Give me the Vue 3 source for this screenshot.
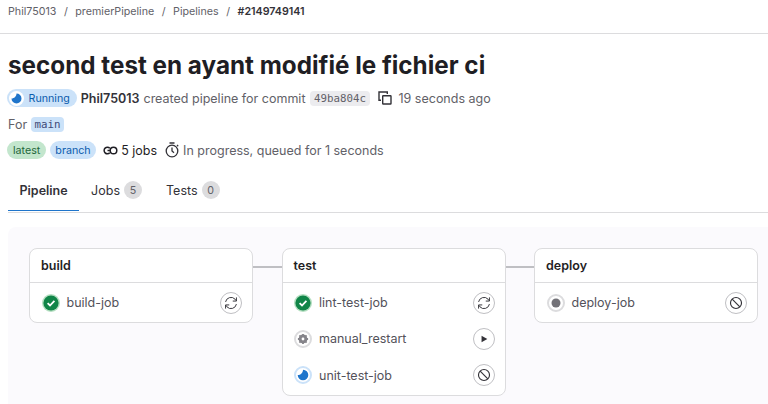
<script setup>
const tabs = [
  { name: 'Pipeline', active: true },
  { name: 'Jobs', count: 5 },
  { name: 'Tests', count: 0 },
]

const stages = [
  { name: 'build', jobs: [{ name: 'build-job', status: 'success', action: 'retry' }] },
  {
    name: 'test',
    jobs: [
      { name: 'lint-test-job', status: 'success', action: 'retry' },
      { name: 'manual_restart', status: 'manual', action: 'play' },
      { name: 'unit-test-job', status: 'running', action: 'cancel' },
    ],
  },
  { name: 'deploy', jobs: [{ name: 'deploy-job', status: 'pending', action: 'cancel' }] },
]
</script>

<template>
  <div class="page">
    <nav class="crumbs">
      <span>Phil75013</span><i>/</i>
      <span>premierPipeline</span><i>/</i>
      <span>Pipelines</span><i>/</i>
      <b>#2149749141</b>
    </nav>

    <h1>second test en ayant modifié le fichier ci</h1>

    <div class="meta">
      <span class="badge status-badge">
        <svg viewBox="0 0 15 15" width="15" height="15">
          <circle cx="7.5" cy="7.5" r="7.5" fill="#fff" />
          <path d="M7.5 2.5A5 5 0 1 1 2.5 7.5C5.3 7.5 7.5 5.3 7.5 2.5Z" fill="#1f75cb" />
        </svg>
        Running
      </span>
      <strong>Phil75013</strong>
      <span>created pipeline for commit</span>
      <code class="sha">49ba804c</code>
      <svg class="copy" viewBox="0 0 14 14" width="14" height="14" fill="none" stroke="#333238" stroke-width="1.4">
        <path d="M3 9.3H1V1H9.3V3" />
        <rect x="4.7" y="4.7" width="8.3" height="8.3" rx="0.5" />
      </svg>
      <span class="ago">19 seconds ago</span>
    </div>

    <div class="meta for">
      <span>For</span>
      <code class="ref">main</code>
    </div>

    <div class="meta tags">
      <span class="badge green">latest</span>
      <span class="badge blue">branch</span>
      <span class="jobs">
        <svg viewBox="0 0 15 15" width="15" height="15" fill="none" stroke="#1f1e24" stroke-width="1.5">
          <circle cx="10.5" cy="7.5" r="3.3" />
          <path d="M6.8 5.2A3.3 3.3 0 1 0 6.8 9.8" />
          <path d="M4.5 7.5H7.5" />
        </svg>
        5 jobs
      </span>
      <span class="progress">
        <svg viewBox="0 0 14 16" width="14" height="16" fill="none" stroke="#333238" stroke-width="1.3">
          <circle cx="7" cy="9" r="5.8" />
          <path d="M7 5.5V9L9 10.8M4.5 1H9.5M12 3L13.2 4.2" />
        </svg>
        In progress, queued for 1 seconds
      </span>
    </div>

    <div class="tabs">
      <div v-for="tab in tabs" :key="tab.name" class="tab" :class="{ active: tab.active }">
        {{ tab.name }}
        <span v-if="tab.count !== undefined" class="count">{{ tab.count }}</span>
      </div>
    </div>

    <div class="graph">
      <template v-for="(stage, index) in stages" :key="stage.name">
        <div v-if="index" class="link"></div>
        <section class="stage">
          <header>{{ stage.name }}</header>
          <div class="job-list">
            <div v-for="job in stage.jobs" :key="job.name" class="job">
              <svg class="status" viewBox="0 0 18 18" width="18" height="18">
                <template v-if="job.status === 'success'">
                  <circle cx="9" cy="9" r="9" fill="#b5dfc1" />
                  <circle cx="9" cy="9" r="7.6" fill="#108548" />
                  <path d="M5.6 9.2L8 11.5L12.4 6.8" fill="none" stroke="#fff" stroke-width="1.8" />
                </template>
                <template v-else-if="job.status === 'manual'">
                  <circle cx="9" cy="9" r="8" fill="#fff" stroke="#dcdcde" stroke-width="2" />
                  <circle cx="9" cy="9" r="3.3" fill="none" stroke="#85848a" stroke-width="2.2" />
                  <path d="M9 3.9V14.1M3.9 9H14.1M5.4 5.4L12.6 12.6M12.6 5.4L5.4 12.6" stroke="#85848a" stroke-width="1.8" />
                  <circle cx="9" cy="9" r="1.4" fill="#fff" />
                </template>
                <template v-else-if="job.status === 'running'">
                  <circle cx="9" cy="9" r="8" fill="#fff" stroke="#cbe2f9" stroke-width="2" />
                  <path d="M9 3.7A5.3 5.3 0 1 1 3.7 9C6.7 9 9 6.7 9 3.7Z" fill="#1f75cb" />
                </template>
                <template v-else>
                  <circle cx="9" cy="9" r="8" fill="#fff" stroke="#dcdcde" stroke-width="2" />
                  <circle cx="9" cy="9" r="4.5" fill="#737278" />
                </template>
              </svg>
              <span class="job-name">{{ job.name }}</span>
              <span class="action">
                <svg viewBox="0 0 16 16" width="14" height="14" fill="none" stroke="#333238" stroke-width="1.1">
                  <template v-if="job.action === 'retry'">
                    <path d="M1.8 6.8A6.3 6.3 0 0 1 12.6 3.6L14 5.4" />
                    <path d="M14.2 1.6V5.8H10" />
                    <path d="M14.2 9.2A6.3 6.3 0 0 1 3.4 12.4L2 10.6" />
                    <path d="M1.8 14.4V10.2H6" />
                  </template>
                  <path v-else-if="job.action === 'play'" d="M5.2 4.2V11.8L11.8 8Z" fill="#333238" stroke="none" />
                  <template v-else>
                    <circle cx="8" cy="8" r="6.3" stroke-width="1.3" />
                    <path d="M3.6 3.6L12.4 12.4" stroke-width="1.3" />
                  </template>
                </svg>
              </span>
            </div>
          </div>
        </section>
      </template>
    </div>
  </div>
</template>

<style>
html,
body {
  margin: 0;
  background: #fff;
  overflow: hidden;
}
</style>

<style scoped>
.page {
  width: 768px;
  height: 404px;
  overflow: hidden;
  box-sizing: border-box;
  padding: 0 0 0 8px;
  font-family: Inter, "Noto Sans", sans-serif;
  font-size: 12.5px;
  color: #626168;
}

.crumbs {
  display: flex;
  align-items: center;
  height: 22px;
  margin-left: -8px;
  padding: 0 0 11px 8px;
  border-bottom: 1px solid #dcdcde;
  font-size: 10.7px;
  color: #626168;
}

.crumbs i {
  font-style: normal;
  margin: 0 7.5px;
}

.crumbs b {
  color: #333238;
  font-weight: 600;
}

h1 {
  margin: 14px 0 0;
  font-size: 24.25px;
  line-height: 36px;
  font-weight: 700;
  color: #1f1e24;
}

.meta {
  display: flex;
  align-items: center;
  height: 20px;
  white-space: nowrap;
}

h1 + .meta {
  margin-top: 4px;
}

.meta > strong {
  margin-left: 4px;
  font-weight: 600;
  color: #333238;
}

.meta > strong + span {
  margin-left: 4px;
}

.badge {
  display: inline-flex;
  align-items: center;
  height: 18px;
  padding: 0 6px;
  border-radius: 9px;
  font-size: 10.7px;
}

.status-badge {
  margin-left: -1px;
  padding: 0 7px 0 1.5px;
  gap: 5px;
  background: #cbe2f9;
  color: #0b5cad;
}

.green {
  margin-left: -1px;
  background: #c3e6cd;
  color: #24663b;
}

.blue {
  padding: 0 5px;
  background: #cbe2f9;
  color: #0b5cad;
}

.sha {
  margin-left: 5px;
  padding: 1px 3.5px;
  border-radius: 4px;
  background: #ececef;
  font-family: "DejaVu Sans Mono", monospace;
  font-size: 10.8px;
  color: #626168;
}

.copy {
  margin-left: 8px;
}

.ago {
  margin-left: 7px;
}

.for {
  margin-top: 6px;
  gap: 4px;
}

.ref {
  padding: 1px 3.5px;
  border-radius: 4px;
  background: #cbe2f9;
  font-family: "DejaVu Sans Mono", monospace;
  font-size: 10.8px;
  color: #3f4a78;
}

.tags {
  margin-top: 6px;
  gap: 4px;
}

.jobs {
  display: inline-flex;
  align-items: center;
  gap: 3.5px;
  margin-left: 3px;
  color: #1f1e24;
}

.progress {
  display: inline-flex;
  align-items: center;
  gap: 4px;
  margin-left: 4px;
}

.tabs {
  display: flex;
  height: 40px;
  margin: 12px 0 0;
  border-bottom: 1px solid #dcdcde;
}

.tab {
  display: flex;
  align-items: center;
  gap: 4px;
  height: 36px;
  padding: 0 12px 3px;
  color: #333238;
}

.tab.active {
  font-weight: 600;
  padding: 0 11.5px 3px;
  box-shadow: inset 0 -1px 0 #1f75cb;
}

.count {
  display: inline-flex;
  align-items: center;
  justify-content: center;
  width: 18px;
  height: 18px;
  border-radius: 50%;
  background: #dcdcde;
  font-size: 10.7px;
  color: #626168;
}

.graph {
  display: flex;
  align-items: flex-start;
  height: 177px;
  margin-top: 14px;
  padding: 21px 0 0 21px;
  border-radius: 8px 0 0 0;
  background: #fbfafd;
}

.link {
  flex: none;
  width: 28.5px;
  height: 2px;
  margin-top: 18px;
  background: #bfbfc3;
}

.stage {
  flex: none;
  box-sizing: border-box;
  width: 224px;
  border: 1px solid #dcdcde;
  border-radius: 8px;
  background: #fff;
}

header {
  display: flex;
  align-items: center;
  height: 33px;
  padding-left: 11px;
  border-bottom: 1px solid #dcdcde;
  font-size: 12.5px;
  font-weight: 600;
  color: #1f1e24;
}

.job-list {
  padding: 1.5px 0;
}

.job {
  display: flex;
  align-items: center;
  height: 36.33px;
  padding: 0 10px 0 11.5px;
}

.status {
  flex: none;
}

.job-name {
  flex: 1;
  margin-left: 7px;
  font-size: 12.5px;
  color: #53525a;
}

.action {
  display: flex;
  align-items: center;
  justify-content: center;
  box-sizing: border-box;
  width: 22px;
  height: 22px;
  border: 1px solid #bfbfc3;
  border-radius: 50%;
}
</style>
